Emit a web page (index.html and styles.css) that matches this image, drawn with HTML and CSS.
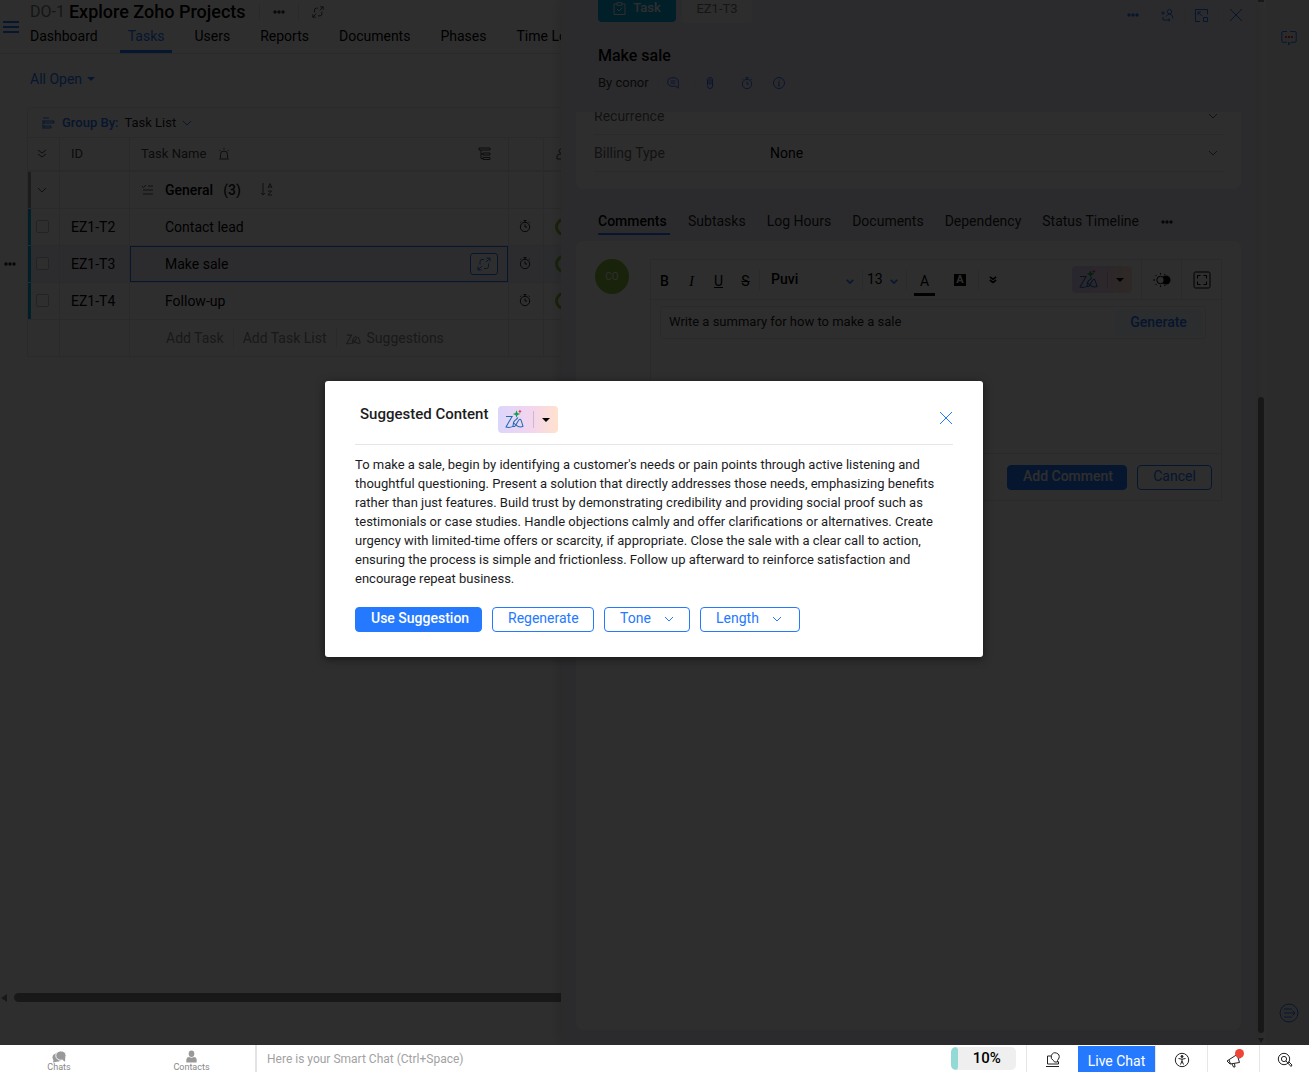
FILE: index.html
```html
<!DOCTYPE html>
<html lang="en">
<head>
<meta charset="utf-8">
<meta name="viewport" content="width=device-width, initial-scale=1">
<title>Explore Zoho Projects</title>
<link rel="stylesheet" href="styles.css">
</head>
<body>
<svg class="sprite" aria-hidden="true">
  <symbol id="chev" viewBox="0 0 10 6"><path d="M1 1l4 4 4-4"/></symbol>
  <symbol id="dchev" viewBox="0 0 10 10"><path d="M1 1l4 3 4-3M1 5l4 3 4-3"/></symbol>
  <symbol id="caret" viewBox="0 0 8 4"><path d="M0 0h8L4 4z"/></symbol>
  <symbol id="dots" viewBox="0 0 12 4"><circle cx="2" cy="2" r="1.7"/><circle cx="6" cy="2" r="1.7"/><circle cx="10" cy="2" r="1.7"/></symbol>
  <symbol id="expand" viewBox="0 0 14 14"><path d="M9 5l4-4M9.500 1H13v3.500M5 9l-4 4M1 9.500V13h3.500M7 2.500H5A2 2 0 0 0 3 4.500V7.500M7 11.500H9.500a2 2 0 0 0 2-2V6.500"/></symbol>
  <symbol id="timer" viewBox="0 0 12 13"><circle cx="6" cy="7" r="4.700"/><path d="M4.500.6h3M6 .6v1.700M1.300 2.700l1-1M10.700 2.700l-1-1M6 4.500V7h2"/></symbol>
  <symbol id="close" viewBox="0 0 14 14"><path d="M1 1l12 12M13 1L1 13"/></symbol>
  <symbol id="zia" viewBox="0 0 56 56"><path d="M3 19h18L3 50q10 3 19-1c4-3 1-10 4-14 3-5 9-7 12-13M23 48c4 3 9-2 12-9 3-6 6-13 10-12 3 1 5 12 8 21-8 5-17 1-28-10"/></symbol>
</svg>

<div class="app">
  <main class="main">
    <header class="top">
      <button class="plain burger" aria-label="Menu"><i></i><i></i><i></i></button>
      <div class="top-body">
        <div class="project"><span class="code">DO-1</span><h1>Explore Zoho Projects</h1>
          <button class="plain tool" aria-label="More"><svg class="dots"><use href="#dots"/></svg></button>
          <button class="plain tool" aria-label="Expand"><svg class="line i12"><use href="#expand"/></svg></button>
        </div>
        <nav class="nav">
          <a href="#">Dashboard</a><a href="#" class="on">Tasks</a><a href="#">Users</a><a href="#">Reports</a><a href="#">Documents</a><a href="#">Phases</a><a href="#">Time Logs</a>
        </nav>
      </div>
    </header>
    <button class="plain view">All Open <svg class="caret"><use href="#caret"/></svg></button>
    <section class="list">
      <div class="group">
        <svg class="line i12" viewBox="0 0 12 12"><path d="M0 1h6M1 4h10v2H1zM1 9h7v2H1zM0 3v9"/></svg>
        <b>Group By:</b><span>Task List</span><svg class="line chev"><use href="#chev"/></svg>
      </div>
      <table class="tasks">
        <colgroup><col class="c-tick"><col class="c-id"><col class="c-name"><col class="c-time"><col class="c-owner"></colgroup>
        <thead><tr>
          <th><svg class="line i10"><use href="#dchev"/></svg></th><th class="id">ID</th>
          <th><div class="name-head">Task Name <svg class="line i12" viewBox="0 0 12 12"><path d="M2.500 10V6.500a3.500 3.500 0 0 1 7 0V10M1 11h10M6 0v1.500M1.500 2l1 1M10.500 2l-1 1"/></svg><svg class="line i13 end" viewBox="0 0 13 13"><path d="M1 1h11v2H1zM5 6h7v2H5zM5 10.500h7v2H5zM3 3v8.500h2M3 7h2"/></svg></div></th>
          <th></th><th class="owner"><svg class="line i12" viewBox="0 0 12 12"><circle cx="6" cy="3" r="2"/><path d="M2 11V8q0-2 4-2t4 2v3z"/></svg></th>
        </tr></thead>
        <tbody>
          <tr class="general"><td><svg class="line chev"><use href="#chev"/></svg></td><td></td>
            <td><div class="gen"><svg class="line i11" viewBox="0 0 11 11"><path d="M0 2l1.500 1.500L4 1M6 2h5M1 6h10M1 10h10"/></svg><b>General</b><b>(3)</b><svg class="line sort" viewBox="0 0 13 13"><path d="M3 0v12M1 10l2 2 2-2M8 5l2-4.500L12 5M8.500 4h3M8 8h3.500L8 12h4"/></svg></div></td><td></td><td></td></tr>
          <tr class="task"><td><input type="checkbox" aria-label="Select EZ1-T2"></td><td class="id">EZ1-T2</td><td class="name">Contact lead</td><td><svg class="line timer"><use href="#timer"/></svg></td><td class="owner"><span class="mini"></span></td></tr>
          <tr class="task active"><td><svg class="dots gutter"><use href="#dots"/></svg><input type="checkbox" aria-label="Select EZ1-T3"></td><td class="id">EZ1-T3</td><td class="name"><div class="cell">Make sale<button class="open" aria-label="Open"><svg class="line i14"><use href="#expand"/></svg></button></div></td><td><svg class="line timer"><use href="#timer"/></svg></td><td class="owner"><span class="mini"></span></td></tr>
          <tr class="task"><td><input type="checkbox" aria-label="Select EZ1-T4"></td><td class="id">EZ1-T4</td><td class="name">Follow-up</td><td><svg class="line timer"><use href="#timer"/></svg></td><td class="owner"><span class="mini"></span></td></tr>
          <tr class="add"><td></td><td></td><td><div class="adds"><button class="plain">Add Task</button><button class="plain">Add Task List</button><button class="plain"><svg class="line zia-small"><use href="#zia"/></svg>Suggestions</button></div></td><td></td><td></td></tr>
        </tbody>
      </table>
    </section>
    <div class="hscroll"><i class="left"></i><i class="thumb"></i></div>
  </main>

  <aside class="panel">
    <header class="phead">
      <div class="chips">
        <span class="chip blue"><svg class="line i13" viewBox="0 0 13 13"><path d="M4 2H1v10.500h11V2H9M4 .7h5v2.600H4zM4 7l2 2 3.500-3.500"/></svg>Task</span><span class="chip">EZ1-T3</span>
        <div class="actions">
          <button class="plain" aria-label="More"><svg class="dots"><use href="#dots"/></svg></button>
          <button class="plain" aria-label="Add follower"><svg class="line i13" viewBox="0 0 13 13"><circle cx="8.500" cy="2.700" r="2.200"/><path d="M5 7.500q2-2.500 3.500-2.500Q12 5.500 12 9.500M0 4h4M2 2v4M2 8v3h7M7.500 9.500L9 11l-1.500 1.500"/></svg></button>
          <button class="plain" aria-label="Detach"><svg class="line i13" viewBox="0 0 13 13"><path d="M5 12.500H.5V.5h12v5M3 3l4 4M3 6V3h3M8.500 8.500h4v4h-4z"/></svg></button>
          <button class="plain" aria-label="Close"><svg class="line i14"><use href="#close"/></svg></button>
        </div>
      </div>
      <h2>Make sale</h2>
      <div class="meta"><span>By conor</span>
        <button class="plain" aria-label="Comments"><svg class="line i12" viewBox="0 0 12 12"><path d="M11.300 11.300V5q0-4.200-4.300-4.200H5Q.7.800.7 5T5 9.200h4zM3.500 4h5M3.500 6.200h5"/></svg></button>
        <button class="plain" aria-label="Attachments"><svg class="line i12" viewBox="0 0 12 12"><path d="M3.500 8.500V3a2.500 2.500 0 0 1 5 0v6a2.500 2.500 0 0 1-5 0M5 7V3.500a1 1 0 0 1 2 0V7z"/></svg></button>
        <button class="plain" aria-label="Timer"><svg class="line timer"><use href="#timer"/></svg></button>
        <button class="plain" aria-label="Information"><svg class="line i12" viewBox="0 0 12 12"><circle cx="6" cy="6" r="5.500"/><path d="M5 5h1.300L5.500 9H7M6.400 2.500v1"/></svg></button>
      </div>
    </header>
    <section class="card fields">
      <div class="field first"><span>Recurrence</span><span></span><svg class="line chev"><use href="#chev"/></svg></div>
      <div class="field"><span>Billing Type</span><strong>None</strong><svg class="line chev"><use href="#chev"/></svg></div>
    </section>
    <nav class="tabs"><a href="#" class="on">Comments</a><a href="#">Subtasks</a><a href="#">Log Hours</a><a href="#">Documents</a><a href="#">Dependency</a><a href="#">Status Timeline</a><button class="plain" aria-label="More tabs"><svg class="dots big"><use href="#dots"/></svg></button></nav>
    <section class="card comments">
      <span class="avatar">CO</span>
      <div class="editor">
        <div class="bar">
          <button class="plain fmt"><b>B</b></button><button class="plain fmt"><em>I</em></button><button class="plain fmt"><u>U</u></button><button class="plain fmt"><s>S</s></button>
          <div class="pick font"><select aria-label="Font"><option>Puvi</option></select><svg class="line chev8"><use href="#chev"/></svg></div>
          <div class="pick size"><select aria-label="Font size"><option>13</option></select><svg class="line chev8"><use href="#chev"/></svg></div>
          <button class="plain wide color"><span>A</span></button>
          <button class="plain wide fill"><span>A</span></button>
          <button class="plain wide more" aria-label="More formatting"><svg class="line"><use href="#dchev"/></svg></button>
          <div class="zia"><svg class="zia-logo" viewBox="0 0 56 56"><use href="#zia"/><path class="star" d="M34 1l3 8 8 3-8 3-3 8-3-8-8-3 8-3z"/><path class="spark" d="M44-1l2 3 3 2-3 2-2 4-2-4-3-2 3-2z"/></svg><i></i><svg class="caret"><use href="#caret"/></svg></div>
          <button class="plain mode" aria-label="Theme"><svg viewBox="0 0 18 14"><circle class="solid" cx="13" cy="7" r="4.500"/><circle class="disc" cx="7.500" cy="7" r="3.700"/><path class="ray" d="M0 7h2M7.500 0v1.500M7.500 12.500V14M2.500 2l1 1M2.500 12l1-1M12 1l-.5 1M12 13l-.5-1"/></svg></button>
          <button class="plain mode" aria-label="Full screen"><svg class="line" viewBox="0 0 18 18"><rect x="1" y="1" width="16" height="16" rx="1.500"/><path d="M4.500 7.500v-3h3M10.500 4.500h3v3M13.500 10.500v3h-3M7.500 13.500h-3v-3"/></svg></button>
        </div>
        <div class="area"><div class="prompt"><input type="text" aria-label="Prompt" value="Write a summary for how to make a sale"><button class="gen-btn">Generate</button></div></div>
        <div class="foot"><button class="btn solid-btn">Add Comment</button><button class="btn">Cancel</button></div>
      </div>
    </section>
  </aside>
  <div class="vscroll"><i class="up"></i><i class="thumb"></i><i class="down"></i></div>
  <aside class="rail">
    <button class="plain" aria-label="Feedback"><svg class="line" viewBox="0 0 16 16"><path d="M6 1.500H2Q.8 1.500.8 3v8q0 1.300 1.200 1.300h4M9 1.500h5q1.200 0 1.200 1.500v8q0 1.300-1.200 1.300h-4L7.500 15v-3"/><path class="red" d="M4 7h8"/></svg></button>
    <button class="plain" aria-label="Expand rail"><svg class="line big" viewBox="0 0 20 20"><circle cx="10" cy="10" r="9"/><path d="M5 6h8M5 10h11M5 14h8M13.500 7.500L16 10l-2.500 2.500"/></svg></button>
  </aside>

  <div class="scrim">
    <div class="modal" role="dialog" aria-labelledby="dlg">
      <header><h2 id="dlg">Suggested Content</h2>
        <button class="zia" aria-label="Zia options"><svg class="zia-logo" viewBox="0 0 56 56"><use href="#zia"/><path class="star" d="M34 1l3 8 8 3-8 3-3 8-3-8-8-3 8-3z"/><path class="spark" d="M44-1l2 3 3 2-3 2-2 4-2-4-3-2 3-2z"/></svg><i></i><svg class="caret"><use href="#caret"/></svg></button>
        <button class="plain x" aria-label="Close dialog"><svg class="line i14"><use href="#close"/></svg></button>
      </header>
      <p>To make a sale, begin by identifying a customer's needs or pain points through active listening and thoughtful questioning. Present a solution that directly addresses those needs, emphasizing benefits rather than just features. Build trust by demonstrating credibility and providing social proof such as testimonials or case studies. Handle objections calmly and offer clarifications or alternatives. Create urgency with limited-time offers or scarcity, if appropriate. Close the sale with a clear call to action, ensuring the process is simple and frictionless. Follow up afterward to reinforce satisfaction and encourage repeat business.</p>
      <div class="btns"><button class="btn solid-btn">Use Suggestion</button><button class="btn">Regenerate</button><button class="btn drop">Tone <svg class="line chev"><use href="#chev"/></svg></button><button class="btn drop">Length <svg class="line chev"><use href="#chev"/></svg></button></div>
    </div>
  </div>
</div>

<footer class="dock">
  <div class="dock-tabs">
    <button class="plain"><svg viewBox="0 0 16 13"><ellipse cx="5.500" cy="7.500" rx="5" ry="4.500"/><path d="M1 13l1-4 3 3z"/><ellipse class="halo" cx="9.500" cy="5.500" rx="5.500" ry="5"/><path d="M14 12l-3-2 3-3z"/></svg>Chats</button>
    <button class="plain"><svg viewBox="0 0 16 13"><ellipse cx="8" cy="3.500" rx="3" ry="3.500"/><path d="M2.500 13V9.500Q3 7 5.500 7q2.500 1.500 5 0 2.500 0 3 2.500V13z"/></svg>Contacts</button>
  </div>
  <input class="smart" type="text" aria-label="Smart Chat" placeholder="Here is your Smart Chat (Ctrl+Space)">
  <div class="progress"><i style="width:10%"></i><span>10%</span></div>
  <button class="plain cell52" aria-label="Tips"><svg class="line" viewBox="0 0 16 16"><path d="M6 4H2.500v8M1 14.500h13M2.500 12h11V9.500M8.500 8.500A4 4 0 1 1 14 6l-1.500 2.500v1.500h-3z"/></svg></button>
  <button class="live">Live Chat</button>
  <button class="plain cell52" aria-label="Accessibility"><svg class="line" viewBox="0 0 16 16"><circle cx="8" cy="8" r="6.700"/><circle class="solid" cx="8" cy="4.500" r="1"/><path d="M4.500 6.500l3.500.7 3.500-.7M8 7v2.500M6.500 12.500L8 9l1.500 3.500"/></svg></button>
  <button class="plain cell52 news" aria-label="Announcements"><svg class="line" viewBox="0 0 16 16"><path d="M1 9l10-6.500 2.500 8L4 12zM3 8l1.500 4M6 12l1.500 3H9l-.5-3.500M13 6l2-.5"/></svg><span class="badge"></span></button>
  <button class="plain cell52" aria-label="Search"><svg class="line" viewBox="0 0 16 16"><circle cx="7" cy="7" r="5.700"/><circle cx="7" cy="7" r="2.600"/><path d="M9 9l5 5.500L15 13l-3.500-3.500"/></svg></button>
</footer>
</body>
</html>
```
FILE: styles.css
```css
* { box-sizing: border-box; }
:root { --blue: #2579ff; --line: #e8e8ea; --text: #1c1c1e; }
body { margin: 0; height: 100vh; display: flex; flex-direction: column; overflow: hidden; font: 14px/18px Roboto, "Liberation Sans", sans-serif; color: var(--text); background: #fff; }
button, input, select { font: inherit; color: inherit; }
button { cursor: pointer; }
a { color: inherit; text-decoration: none; }
h1, h2, p { margin: 0; }
svg { display: block; flex: none; fill: currentColor; overflow: visible; }
.sprite { position: absolute; width: 0; height: 0; }
.line { fill: none; stroke: currentColor; stroke-width: 1; }
.plain { border: 0; background: none; padding: 0; display: flex; align-items: center; justify-content: center; }
.i10 { width: 10px; height: 10px; }
.i11 { width: 11px; height: 11px; }
.i12 { width: 12px; height: 12px; }
.i13 { width: 13px; height: 13px; }
.i14 { width: 14px; height: 14px; }
.chev { width: 10px; height: 6px; }
.chev8 { width: 8px; height: 5px; stroke-width: 2; }
.caret { width: 8px; height: 4px; }
.dots { width: 12px; height: 4px; }
.dots.big { width: 14px; }
.timer { width: 12px; height: 13px; }

.app { position: relative; flex: 1; min-height: 0; display: flex; }
.main { flex: 1; min-width: 0; overflow: hidden; display: flex; flex-direction: column; }
.top { display: flex; height: 54px; border-bottom: 1px solid var(--line); }
.burger { width: 30px; flex: none; flex-direction: column; align-items: flex-start; gap: 3px; padding-left: 3px; color: var(--blue); }
.burger i { width: 16px; height: 2px; background: currentColor; }
.project { display: flex; align-items: center; height: 25px; padding-bottom: 1px; }
.code { font-size: 16px; color: #777; margin-right: 4px; }
h1 { font-size: 18px; line-height: 20px; font-weight: 500; color: #000; margin-right: 13px; white-space: nowrap; }
.tool { width: 39px; height: 16px; border-left: 1px solid var(--line); color: #333; }
.nav { display: flex; gap: 30px; white-space: nowrap; color: #000; }
.nav a { height: 28px; line-height: 23px; }
.nav .on { color: var(--blue); border-bottom: 3px solid; padding: 0 8px; margin: 0 -8px; }
.view { align-self: flex-start; margin: 16px 0 0 30px; gap: 5px; color: var(--blue); height: 18px; }
.list { flex: 1; margin: 19px 0 0 27px; }
.group { display: flex; align-items: center; gap: 6px; height: 30px; padding-left: 15px; border: 1px solid var(--line); border-width: 1px 0 0 1px; border-radius: 5px 0 0 0; font-size: 13px; }
.group b, .group .i12 { color: var(--blue); }
.group b { font-weight: 500; margin-left: 1px; }
.group .chev { color: var(--blue); }
.tasks { table-layout: fixed; width: 600px; border-collapse: separate; border-spacing: 0; border: 1px solid var(--line); border-width: 1px 0 0 1px; }
.c-tick { width: 32px; } .c-id { width: 70px; } .c-name { width: 379px; } .c-time { width: 35px; }
th, td { height: 37px; padding: 0 0 1px; border: 1px solid var(--line); border-width: 0 1px 1px 0; text-align: left; vertical-align: middle; font-weight: 400; }
th { height: 34px; border-bottom-width: 2px; color: #444; font-size: 13px; }
th:first-child svg, td:first-child > .chev { margin-left: 9px; }
td:nth-child(4) svg { margin-left: 10px; color: #222; }
.id { padding-left: 11px; }
.name-head { display: flex; align-items: center; padding: 0 17px 0 11px; gap: 12px; }
.end { margin-left: auto; }
.owner { padding-left: 11px; }
.gen { display: flex; align-items: center; padding-left: 12px; gap: 10px; }
.gen b { font-weight: 500; }
.gen b:nth-of-type(1) { margin-left: 2px; color: #000; }
.sort { width: 13px; height: 13px; margin-left: 9px; color: #555; }
.general svg { color: #555; }
.task td { color: #000; }
.task td:first-child, .general td:first-child { position: relative; box-shadow: inset 3px 0 #00a9e0; }
.general td:first-child { box-shadow: inset 3px 0 #999; }
.task .name { padding-left: 35px; }
input[type=checkbox] { appearance: none; display: block; width: 13px; height: 13px; margin: 0 0 0 8px; border: 1px solid #bcc0cc; border-radius: 2px; background: #fff; }
.active td { background: #f0f5fc; }
.task.active .name { padding: 0; }
.cell { display: flex; align-items: center; justify-content: space-between; height: 36px; padding: 0 9px 1px 34px; border: 1px solid var(--blue); }
.open { width: 28px; height: 22px; padding: 0 6px; border: 1px solid var(--blue); border-radius: 3px; background: #fff; color: var(--blue); }
.gutter { position: absolute; left: -24px; top: 16px; color: #222; }
.mini { display: block; width: 18px; height: 18px; border-radius: 50%; border: 3px solid #8dbd40; }
.adds { display: flex; padding-left: 27px; color: #8a8a8a; }
.adds button { height: 20px; padding: 0 9px; gap: 6px; border-right: 1px solid var(--line); }
.adds button:last-child { border: 0; }
.zia-small { width: 15px; height: 15px; stroke-width: 4; }
.hscroll { display: flex; align-items: center; height: 9px; margin-bottom: 43px; padding-left: 1px; }
.hscroll .left { border: 4px solid transparent; border-left: 0; border-right: 6px solid #888; margin-right: 7px; }
.hscroll .thumb { flex: 1; height: 9px; background: #888; border-radius: 5px 0 0 5px; }

.panel { width: 695px; flex: none; display: flex; flex-direction: column; padding: 0 15px; background: #efeff7; box-shadow: 0 0 14px rgba(0,0,0,.18); z-index: 1; }
.phead { height: 112px; padding-left: 22px; }
.chips { display: flex; gap: 6px; height: 30px; align-items: flex-start; font-size: 13px; }
.chip { display: flex; align-items: center; justify-content: center; width: 70px; height: 23px; padding-bottom: 6px; border-radius: 0 0 4px 4px; background: #f8f8f8; color: #777; }
.chip.blue { width: 78px; height: 22px; gap: 7px; background: #00a9e0; color: #fff; font-weight: 500; }
.actions { display: flex; margin: 5px -11px 0 auto; color: var(--blue); }
.actions button { width: 34px; height: 20px; border-left: 1px solid var(--line); }
.actions button:first-child { border: 0; }
.panel h2 { font-size: 16px; line-height: 20px; font-weight: 500; color: #000; margin-top: 16px; }
.meta { display: flex; align-items: center; height: 18px; margin-top: 8px; font-size: 13px; color: #333; }
.meta span { width: 60px; }
.meta button { width: 37px; height: 14px; padding-left: 8px; justify-content: flex-start; border-left: 1px solid var(--line); color: #3a6dff; }
.meta button:nth-of-type(3) { width: 32px; }
.card { background: #fff; border-radius: 8px; }
.fields { height: 77px; padding: 0 18px; border-radius: 0 0 8px 8px; overflow: hidden; }
.field { display: grid; grid-template-columns: 176px 1fr 20px; align-items: center; height: 37px; border-bottom: 1px solid var(--line); color: #666; }
.field.first { height: 23px; grid-template-rows: 8px; }
.field strong { font-weight: 400; color: #000; }
.field .chev { justify-self: center; }
.tabs { display: flex; gap: 21px; height: 52px; padding: 20px 0 0 22px; color: #222; white-space: nowrap; }
.tabs a, .tabs button { height: 26px; line-height: 25px; }
.tabs .on { width: 72px; margin-right: -3px; border-bottom: 2px solid var(--blue); font-weight: 500; color: #000; }
.comments { flex: 1; display: flex; align-items: flex-start; margin-bottom: 15px; padding: 18px 19px; }
.avatar { width: 34px; height: 35px; margin-right: 21px; border-radius: 50%; background: #8dbd40; color: #fff; font-size: 10px; line-height: 35px; text-align: center; }
.editor { flex: 1; border: 1px solid var(--line); }
.bar { display: flex; align-items: center; height: 40px; border-bottom: 1px solid var(--line); color: #000; }
.fmt { width: 27px; height: 30px; padding-top: 3px; font-size: 14px; }
.fmt b { font-weight: 500; }
.fmt em { font-family: "Liberation Serif", serif; font-size: 15px; }
.pick { position: relative; height: 20px; border-left: 1px solid var(--line); }
.pick svg { position: absolute; right: 8px; top: 9px; color: var(--blue); }
.pick select { appearance: none; width: 100%; height: 18px; padding: 0 0 0 11px; border: 0; background: none; font-size: 14px; font-weight: 500; }
.font { width: 103px; } .size { width: 44px; }
.size select { padding-left: 4px; font-weight: 400; }
.wide { width: 36px; height: 20px; }
.color { border-left: 1px solid var(--line); }
.color span { width: 21px; height: 24px; margin-top: 8px; border-bottom: 3px solid #000; }
.fill span { width: 12px; height: 12px; background: #000; color: #fff; font-size: 11px; line-height: 12px; font-weight: 700; }
.more { width: 28px; border-left: 1px solid var(--line); }
.more svg { width: 8px; height: 8px; stroke-width: 2; }
.zia { display: flex; align-items: center; width: 60px; height: 27px; padding: 0 8px 0 7px; border: 0; border-radius: 4px; background: linear-gradient(90deg, #dcd6fb, #f3d5ee 55%, #ffe2cd); color: #000; }
.zia i { width: 1px; height: 17px; margin: 0 8px 0 9px; background: #cfb8ce; }
.zia-logo { width: 19px; height: 19px; fill: none; stroke: #1c6bb5; stroke-width: 3; }
.zia-logo .star { fill: #12a150; stroke: none; }
.zia-logo .spark { fill: #e8384f; stroke: none; }
.bar .zia { margin: 0 9px 0 auto; }
.mode { width: 40px; height: 40px; border-left: 1px solid var(--line); }
.mode svg { width: 18px; height: 18px; }
.disc { fill: #fff; stroke: #000; }
.ray { stroke: #000; }
.area { height: 154px; padding: 6px 15px 0 9px; border-bottom: 1px solid var(--line); }
.prompt { display: flex; height: 33px; padding: 3px; border: 1px solid var(--line); border-radius: 3px; }
.prompt input { flex: 1; min-width: 0; border: 0; padding: 0 5px 2px; background: none; font-size: 13px; }
.gen-btn { width: 87px; padding: 0 0 2px; border: 0; background: #f2f7ff; color: var(--blue); font-weight: 500; }
.foot { display: flex; justify-content: flex-end; gap: 10px; height: 46px; padding: 11px 9px 0; }
.btn { height: 25px; padding: 0 15px 2px; border: 1px solid var(--blue); border-radius: 4px; background: #fff; color: var(--blue); line-height: 21px; white-space: nowrap; }
.solid-btn { background: var(--blue); color: #fff; font-weight: 500; }
.foot .btn { width: 75px; }
.foot .solid-btn { width: 120px; }
.vscroll { width: 10px; flex: none; display: flex; flex-direction: column; align-items: center; background: #fafafa; }
.vscroll .up { width: 6px; height: 2px; background: #888; margin-bottom: 395px; }
.vscroll .thumb { width: 6px; flex: 1; border-radius: 3px; background: #888; }
.vscroll .down { margin: 5px 0 2px; border: 3px solid transparent; border-bottom: 0; border-top: 5px solid #888; }
.rail { width: 43px; flex: none; display: flex; flex-direction: column; justify-content: space-between; align-items: center; padding: 30px 0 22px 2px; background: #efeff5; color: var(--blue); }
.rail svg { width: 16px; height: 16px; }
.rail .big { width: 20px; height: 20px; }
.rail .red { stroke: #e8384f; stroke-dasharray: 2 1; stroke-width: 2; }

.scrim { position: absolute; inset: 0; z-index: 2; display: flex; align-items: center; justify-content: center; padding: 0 1px 7px 0; background: rgba(0,0,0,.82); }
.modal { width: 658px; max-width: 96%; padding: 25px 30px; border-radius: 3px; background: #fff; box-shadow: 0 2px 8px rgba(0,0,0,.5); }
.modal header { display: flex; align-items: flex-start; height: 39px; padding-left: 5px; border-bottom: 1px solid #e6e6e6; }
.modal h2 { width: 138px; font-size: 15px; line-height: 17px; font-weight: 500; white-space: nowrap; }
.x { margin: 5px 0 0 auto; color: var(--blue); }
.modal p { margin: 10px 0 19px; font-size: 13px; line-height: 19px; }
.btns { display: flex; gap: 10px; }
.drop { display: flex; align-items: center; gap: 13px; }
.btns .btn:nth-child(1) { width: 127px; }
.btns .btn:nth-child(2) { width: 102px; }
.btns .btn:nth-child(3) { width: 86px; }
.btns .btn:nth-child(4) { width: 100px; }

.dock { display: flex; height: 27px; flex: none; background: #fff; position: relative; z-index: 3; }
.dock-tabs { display: flex; width: 257px; border-right: 2px solid #e4e4e4; }
.dock-tabs button { width: 137px; flex: none; flex-direction: column; font-size: 9px; line-height: 9px; color: #888; padding: 4px 0 0 10px; }
.dock-tabs button:first-child { width: 118px; padding-left: 0; }
.dock-tabs svg { width: 15px; height: 13px; color: #999; }
.halo { stroke: #fff; stroke-width: 1; }
.smart { flex: 1; min-width: 0; border: 0; padding: 0 10px; font-size: 12px; }
.smart::placeholder { color: #a2a2a2; opacity: 1; }
.progress { position: relative; width: 65px; height: 23px; margin: 2px 10px 0 0; border-radius: 5px; background: #efefef; overflow: hidden; text-align: center; font: 500 15px/22px Roboto, sans-serif; color: #000; }
.progress i { float: left; height: 23px; border-radius: 5px; background: #93d9d6; }
.cell52 { position: relative; width: 52px; border-left: 1px solid #e6e6e6; color: #222; }
.cell52:last-child { width: 50px; }
.cell52 svg { width: 16px; height: 16px; margin-top: 3px; }
.cell52 .solid { fill: currentColor; }
.live { width: 77px; margin-top: 1px; padding: 4px 0 0; border: 0; background: var(--blue); color: #fff; }
.badge { position: absolute; top: 4px; right: 15px; width: 9px; height: 9px; border-radius: 50%; background: #f04438; }
```
